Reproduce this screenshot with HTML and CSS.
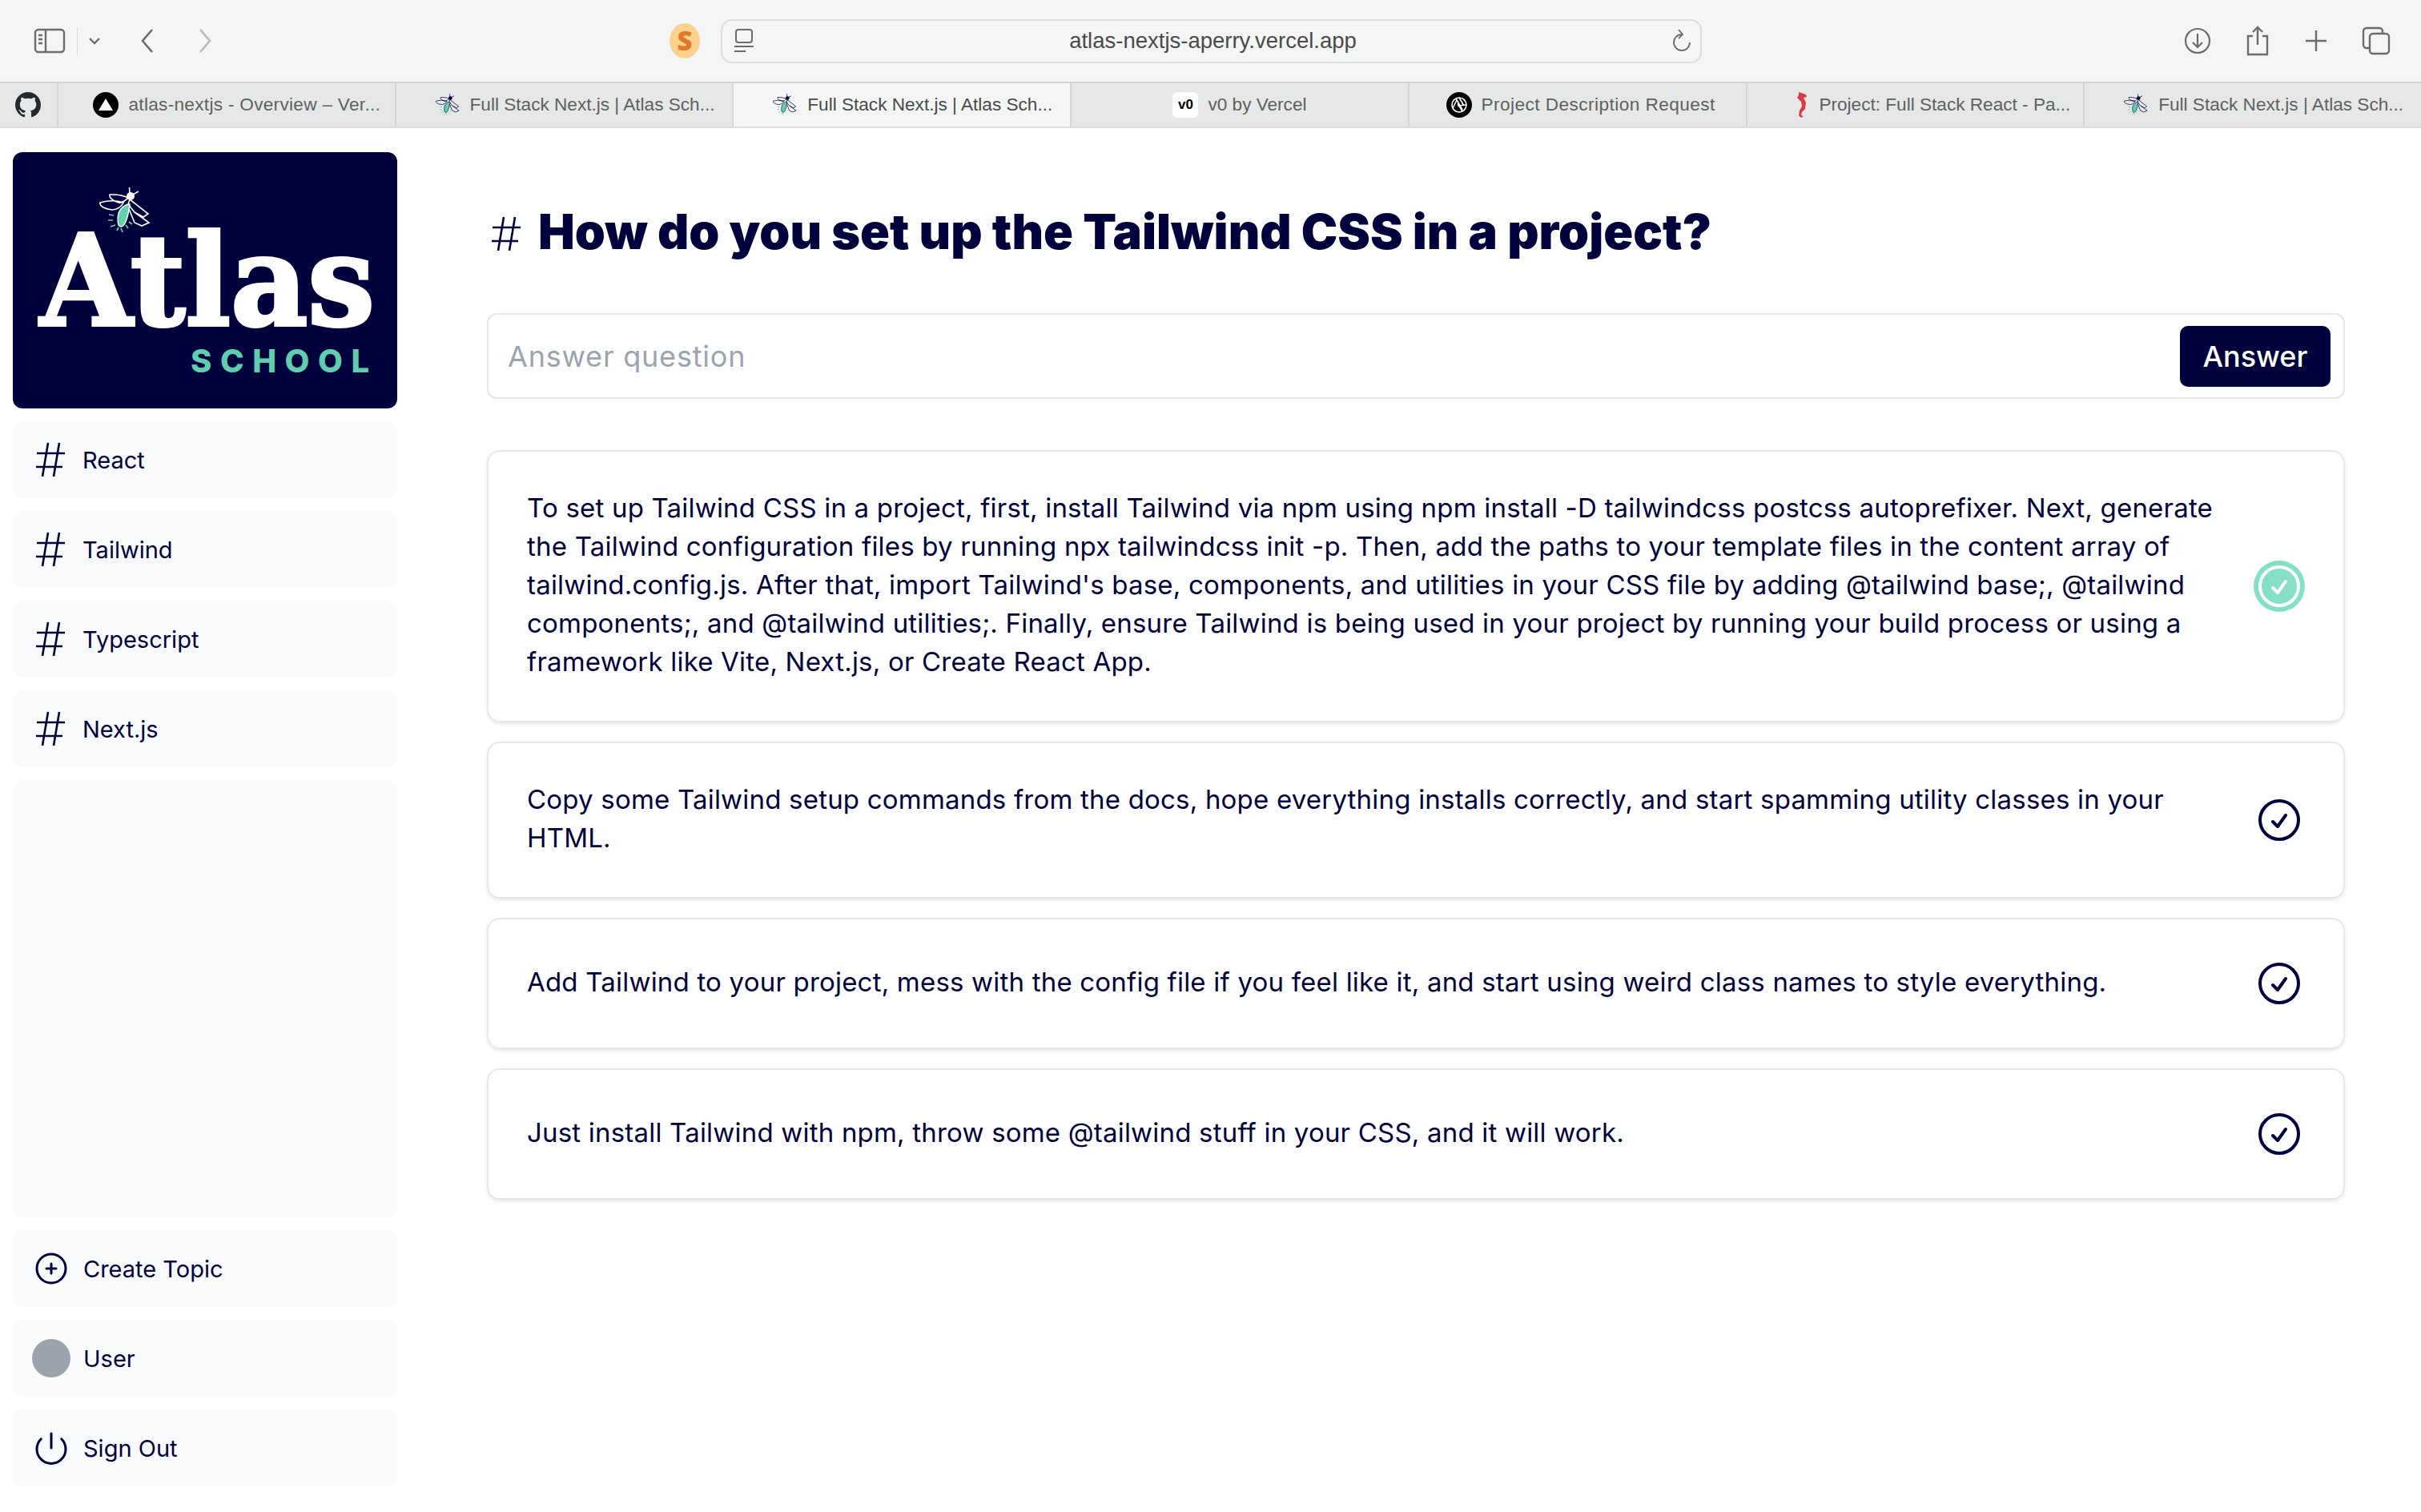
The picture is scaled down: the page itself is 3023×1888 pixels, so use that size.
FILE: index.html

```html
<!DOCTYPE html>
<html lang="en">
<head>
  <meta charset="UTF-8">
  <title>Atlas</title>
  <link rel="stylesheet" href="styles.css">
</head>
<body>
  <svg class="defs" width="0" height="0">
    <symbol id="fly" viewBox="12 8 68 60">
      <path d="M52 17l-.5-8M56 18l7-4" fill="none" stroke="currentColor" stroke-width="1.6"/>
      <circle cx="53" cy="20" r="5" fill="currentColor"/>
      <path d="M50 22C40 17 33 18 27 18c-1 5 5 8 11 10 6 1 8-3 12-6zM44 28C32 24 22 26 15 28c-1 5 7 8 15 9 6 0 12-4 14-9z" fill="none" stroke="currentColor" stroke-width="1.6"/>
      <path d="M52 24l23 18-6 4-11-6-8-10zM58 40l18 13-9 4-9-4-7-17" fill="none" stroke="currentColor" stroke-width="1.6"/>
      <path d="M38 41c-2 9-1 17 3 17 5 0 9-12 11-28-6 0-12 5-14 11z" fill="#63d0b0" stroke="currentColor" stroke-width="1.4"/>
      <path d="M26 43l6 1M25 50h6M28 58l6-2M36 63l2-4M43 65l-2-5M50 60l-3-4M55 55l-4-3" stroke="#63d0b0" stroke-width="1.7" fill="none"/>
    </symbol>
    <symbol id="hash" viewBox="0 0 36 44">
      <path d="M15 1L8 43M29 1l-7 42M1 14h35M0 31h33" fill="none" stroke="currentColor" stroke-width="2.6"/>
    </symbol>
    <symbol id="check" viewBox="0 0 24 24">
      <path d="M9 12.75 11.25 15 15 9.75M21 12a9 9 0 1 1-18 0 9 9 0 0 1 18 0Z" fill="none" stroke="currentColor" stroke-width="1.5" stroke-linecap="round" stroke-linejoin="round"/>
    </symbol>
  </svg>

  <header class="toolbar">
    <div class="tool-left">
      <svg class="i-side" width="40" height="32" viewBox="0 0 40 32" fill="none" stroke="#6b6d6c" stroke-width="2.4"><rect x="2" y="2" width="36" height="28" rx="4"/><path d="M15 2v28M6 9h5M6 14h5M6 19h5"/></svg>
      <span class="tool-sep"></span>
      <svg width="14" height="9" viewBox="0 0 14 9" fill="none" stroke="#6b6d6c" stroke-width="2.4"><path d="M1 1l6 6 6-6"/></svg>
      <svg class="i-back" width="18" height="30" viewBox="0 0 18 30" fill="none" stroke="#6b6d6c" stroke-width="2.6"><path d="M15 1L3 15l12 14"/></svg>
      <svg class="i-fwd" width="18" height="30" viewBox="0 0 18 30" fill="none" stroke="#b9bbba" stroke-width="2.6"><path d="M3 1l12 14L3 29"/></svg>
    </div>
    <div class="s-badge">S</div>
    <div class="address">
      <svg width="26" height="30" viewBox="0 0 26 30" fill="none" stroke="#6b6d6c" stroke-width="2"><rect x="3" y="1" width="20" height="16" rx="3"/><path d="M1 22h24"/><path d="M1 28h14"/></svg>
      <span class="url">atlas-nextjs-aperry.vercel.app</span>
      <svg width="26" height="30" viewBox="0 0 26 30" fill="none" stroke="#6b6d6c" stroke-width="1.8"><path d="M13 7A10 10 0 1 0 23 17M9 1l5 6-5 5"/></svg>
    </div>
    <div class="tool-right">
      <svg width="34" height="34" viewBox="0 0 34 34" fill="none" stroke="#6b6d6c" stroke-width="2.2"><circle cx="17" cy="17" r="15"/><path d="M17 8v17M11 19l6 6 6-6"/></svg>
      <svg width="30" height="38" viewBox="0 0 30 38" fill="none" stroke="#6b6d6c" stroke-width="2.4"><path d="M9 13H3v23h24V13h-6M15 24V2M9 8l6-6 6 6"/></svg>
      <svg width="28" height="28" viewBox="0 0 28 28" fill="none" stroke="#6b6d6c" stroke-width="2.4"><path d="M14 1v26M1 14h26"/></svg>
      <svg width="36" height="36" viewBox="0 0 36 36" fill="none" stroke="#6b6d6c" stroke-width="2.4"><rect x="10" y="9" width="24" height="25" rx="4"/><path d="M10 27H6a4 4 0 0 1-4-4V6a4 4 0 0 1 4-4h16a4 4 0 0 1 4 4v3"/></svg>
    </div>
  </header>

  <nav class="tabs">
    <div class="tab tab-pin">
      <svg width="32" height="32" viewBox="0 0 16 16" fill="#24292f"><path d="M8 0C3.580 0 0 3.580 0 8c0 3.540 2.290 6.530 5.470 7.590.4.070.55-.17.55-.38v-1.340c-2.230.48-2.690-1.070-2.690-1.070-.36-.92-.89-1.170-.89-1.170-.73-.5.050-.49.050-.49.800.06 1.230.83 1.230.83.71 1.220 1.870.87 2.330.66.070-.52.280-.87.510-1.070-1.780-.2-3.640-.89-3.640-3.950 0-.87.310-1.590.82-2.150-.08-.2-.36-1.020.08-2.120 0 0 .67-.21 2.200.82a7.600 7.600 0 0 1 4 0c1.530-1.040 2.200-.82 2.200-.82.440 1.100.16 1.920.08 2.120.51.560.82 1.270.82 2.150 0 3.070-1.870 3.750-3.650 3.950.29.250.54.730.54 1.480v2.200c0 .21.15.46.55.38A8 8 0 0 0 16 8c0-4.420-3.580-8-8-8z"/></svg>
    </div>
    <div class="tab tab-long tab-spread">
      <svg width="32" height="32" viewBox="0 0 32 32"><circle cx="16" cy="16" r="16" fill="#000"/><path d="M16 8l9 15H7z" fill="#fff"/></svg>
      <span>atlas-nextjs - Overview – Ver...</span>
    </div>
    <div class="tab tab-long">
      <svg class="fav" width="32" height="30"><use href="#fly"/></svg>
      <span>Full Stack Next.js | Atlas Sch...</span>
    </div>
    <div class="tab tab-long tab-active">
      <svg class="fav" width="32" height="30"><use href="#fly"/></svg>
      <span>Full Stack Next.js | Atlas Sch...</span>
    </div>
    <div class="tab">
      <span class="v0-ico">v0</span>
      <span>v0 by Vercel</span>
    </div>
    <div class="tab tab-spread tab-desc">
      <svg width="32" height="32" viewBox="0 0 32 32" fill="none"><circle cx="16" cy="16" r="16" fill="#000"/><g stroke="#fff" stroke-width="1.600"><circle cx="16" cy="16" r="9"/><path d="M16 7l6 10M25 16l-11 1M20 24l-6-10M8 20l5-10M12 8l8 14"/></g></svg>
      <span>Project Description Request</span>
    </div>
    <div class="tab tab-longer">
      <svg width="18" height="32" viewBox="0 0 18 32" fill="#d93a4a"><path d="M5 0l9 3 1 3-4 1 3 6-1 8-4 4-1 4 3 1-3 2-3-3 1-6 3-5-1-6-5-5 2-3z"/></svg>
      <span>Project: Full Stack React - Pa...</span>
    </div>
    <div class="tab tab-long">
      <svg class="fav" width="32" height="30"><use href="#fly"/></svg>
      <span>Full Stack Next.js | Atlas Sch...</span>
    </div>
  </nav>

  <div class="page">
    <aside class="sidebar">
      <div class="logo">
        <svg class="logo-art" width="480" height="320" viewBox="0 0 480 320">
          <use href="#fly" x="106" y="43" width="68" height="60" color="#fff"/>
          <text class="logo-name" x="34" y="216" textLength="418" lengthAdjust="spacingAndGlyphs">Atlas</text>
          <text class="logo-sub" x="222" y="275" textLength="223">SCHOOL</text>
        </svg>
      </div>
      <a class="nav-item"><svg class="ico-hash"><use href="#hash"/></svg>React</a>
      <a class="nav-item"><svg class="ico-hash"><use href="#hash"/></svg>Tailwind</a>
      <a class="nav-item"><svg class="ico-hash"><use href="#hash"/></svg>Typescript</a>
      <a class="nav-item"><svg class="ico-hash"><use href="#hash"/></svg>Next.js</a>
      <div class="nav-fill"></div>
      <a class="nav-item"><svg class="ico" viewBox="0 0 24 24" fill="none" stroke="currentColor" stroke-width="1.5" stroke-linecap="round"><path d="M12 9v6M15 12H9M21 12a9 9 0 1 1-18 0 9 9 0 0 1 18 0Z"/></svg>Create Topic</a>
      <a class="nav-item"><span class="avatar"></span>User</a>
      <a class="nav-item"><svg class="ico" viewBox="0 0 24 24" fill="none" stroke="currentColor" stroke-width="1.5" stroke-linecap="round"><path d="M5.640 6.360a9 9 0 1 0 12.720 0M12 3v9"/></svg>Sign Out</a>
    </aside>

    <main class="content">
      <h1 class="title"><svg class="title-hash"><use href="#hash"/></svg>How do you set up the Tailwind CSS in a project?</h1>

      <form class="answer-box">
        <span class="answer-ph">Answer question</span>
        <button class="answer-btn" type="button">Answer</button>
      </form>

      <section class="cards">
        <div class="card">
          <p>To set up Tailwind CSS in a project, first, install Tailwind via npm using npm install -D tailwindcss postcss autoprefixer. Next, generate the Tailwind configuration files by running npx tailwindcss init -p. Then, add the paths to your template files in the content array of tailwind.config.js. After that, import Tailwind's base, components, and utilities in your CSS file by adding @tailwind base;, @tailwind components;, and @tailwind utilities;. Finally, ensure Tailwind is being used in your project by running your build process or using a framework like Vite, Next.js, or Create React App.</p>
          <svg class="mark mark-on"><use href="#check"/></svg>
        </div>
        <div class="card">
          <p>Copy some Tailwind setup commands from the docs, hope everything installs correctly, and start spamming utility classes in your HTML.</p>
          <svg class="mark"><use href="#check"/></svg>
        </div>
        <div class="card">
          <p>Add Tailwind to your project, mess with the config file if you feel like it, and start using weird class names to style everything.</p>
          <svg class="mark"><use href="#check"/></svg>
        </div>
        <div class="card">
          <p>Just install Tailwind with npm, throw some @tailwind stuff in your CSS, and it will work.</p>
          <svg class="mark"><use href="#check"/></svg>
        </div>
      </section>
    </main>
  </div>
</body>
</html>
```

FILE: styles.css

```css
* { box-sizing: border-box; }
html, body { margin: 0; height: 100%; }
body { font-family: Inter, "Noto Sans", sans-serif; color: #00003c; background: #fff; height: 1888px; overflow: hidden; display: flex; flex-direction: column; }
.defs { position: absolute; }

/* browser chrome */
.toolbar { height: 102px; background: #f4f6f5; display: flex; align-items: center; }
.tool-left { width: 838px; padding-left: 42px; display: flex; align-items: center; }
.i-side { flex: none; }
.tool-sep { width: 1px; height: 34px; background: #d9dbda; margin: 0 14px; }
.i-back { margin-left: 50px; }
.i-fwd { margin-left: 54px; }
.s-badge { width: 38px; height: 44px; margin-left: -2px; border-radius: 50%; background: #fdd28c; color: #e07a2b; font: 800 33px/44px "Open Sans", sans-serif; text-align: center; }
.address { width: 1225px; height: 55px; margin-left: 26px; border: 2px solid #dcdedd; border-radius: 14px; display: flex; align-items: center; justify-content: space-between; padding: 0 10px 0 14px; }
.url { font: 400 27.5px "Liberation Sans", sans-serif; color: #4a4a4a; }
.tool-right { flex: 1; display: flex; align-items: center; justify-content: space-between; padding: 0 38px 0 602px; }

.tabs { height: 58px; display: flex; background: #e6e8e7; border-top: 2px solid #d4d6d5; border-bottom: 2px solid #dcdedd; }
.tab { width: 422px; display: flex; align-items: center; justify-content: center; gap: 12px; border-left: 2px solid #d4d6d5; font: 400 22.6px "Liberation Sans", sans-serif; color: #5f615f; white-space: nowrap; }
.tab-pin { width: 71px; border-left: 0; }
.tab-long { padding-left: 26px; }
.tab-longer { padding-left: 44px; }
.tab-spread { letter-spacing: .3px; }
.tab-desc { padding-left: 8px; letter-spacing: .45px; }
.tab-active { background: #f4f6f5; color: #4a4a4a; }
.fav { color: #00003c; }
.v0-ico { width: 32px; height: 32px; border-radius: 6px; background: #fff; color: #000; font: 700 17px/32px "Liberation Sans", sans-serif; text-align: center; }

/* page */
.page { flex: 1; display: flex; min-height: 0; }
.sidebar { width: 480px; margin-left: 16px; padding: 30px 0 32px; display: flex; flex-direction: column; gap: 16px; flex: none; }
.logo { height: 320px; background: #00003c; border-radius: 12px; flex: none; }
.logo-art { display: block; }
.logo-name { font: 700 158px "DejaVu Serif", serif; fill: #fff; stroke: #fff; stroke-width: 4px; }
.logo-sub { font: 800 40px Inter, sans-serif; fill: #5fcdae; }
.nav-item { height: 96px; background: #f9fafb; border-radius: 12px; display: flex; align-items: center; gap: 18px; padding: 0 25px; font-size: 29px; flex: none; }
.nav-fill { flex: 1; background: #f9fafb; border-radius: 12px; }
.ico-hash { width: 36px; height: 44px; flex: none; margin: 0 4px; }
.ico { width: 48px; height: 48px; flex: none; margin: 0 -2px 0 -1px; }
.avatar { width: 48px; height: 48px; border-radius: 50%; background: #9ca3af; flex: none; margin: 0 -2px 0 -1px; }

.content { flex: 1; min-width: 0; padding: 0 95px 0 112px; }
.title { margin: 0; padding-top: 84px; height: 231px; display: flex; align-items: flex-start; gap: 22px; font-size: 61px; font-weight: 900; line-height: 90px; white-space: nowrap; }
.title-hash { width: 36px; height: 44px; margin: 26px 0 0 6px; flex: none; }
.answer-box { height: 107px; border: 2px solid #e5e7eb; border-radius: 12px; display: flex; align-items: center; justify-content: space-between; padding: 0 16px 0 24px; }
.answer-ph { font-size: 36px; letter-spacing: .8px; color: #9ca3af; }
.answer-btn { width: 188px; height: 76px; background: #00003c; color: #fff; border: 0; border-radius: 10px; font: 500 36px Inter, sans-serif; }
.cards { margin-top: 64px; display: flex; flex-direction: column; gap: 24px; }
.card { display: flex; align-items: center; justify-content: space-between; gap: 48px; padding: 48px; border: 2px solid #e5e7eb; border-radius: 16px; box-shadow: 0 2px 4px rgba(0,0,0,.1); }
.card p { margin: -2px 0 2px; flex: 1; font-size: 33px; letter-spacing: .2px; line-height: 48px; }
.mark { width: 64px; height: 64px; flex: none; color: #00003c; }
.mark-on { color: #fff; background: #84dfc6; border-radius: 50%; }
```
